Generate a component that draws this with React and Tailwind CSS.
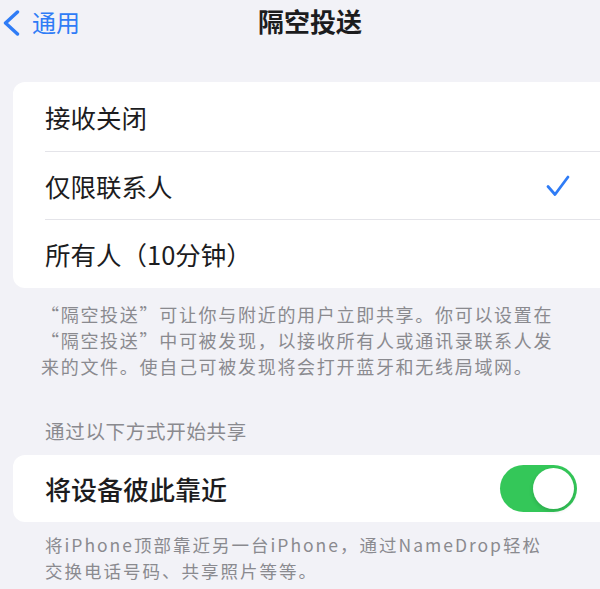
import { useState } from "react";

const rows = [
  { key: "off", label: "接收关闭" },
  { key: "contacts", label: "仅限联系人" },
  { key: "everyone", label: "所有人（10分钟）" },
];

function Chevron() {
  return (
    <svg width="18" height="26" viewBox="0 0 18 26" fill="none">
      <path d="M15.5 2 L3.5 13 L15.5 24" stroke="#2f7cf6" strokeWidth="3.4" strokeLinecap="round" strokeLinejoin="round" />
    </svg>
  );
}

function Check() {
  return (
    <svg width="26" height="24" viewBox="0 0 26 24" fill="none">
      <path d="M3 12.5 L10 20.5 L23 3" stroke="#2f7cf6" strokeWidth="2.8" strokeLinecap="round" strokeLinejoin="round" />
    </svg>
  );
}

function Toggle({ on, onChange }) {
  return (
    <button
      type="button"
      onClick={() => onChange(!on)}
      className={`relative w-[77px] h-[47px] rounded-full transition-colors ${on ? "bg-[#34c759]" : "bg-[#e3e3e8]"}`}
    >
      <span
        className={`absolute top-[3px] w-[41px] h-[41px] rounded-full bg-white shadow-[0_2px_4px_rgba(0,0,0,0.15)] transition-all ${on ? "left-[33px]" : "left-[3px]"}`}
      />
    </button>
  );
}

export default function App() {
  const [mode, setMode] = useState("contacts");
  const [nearby, setNearby] = useState(true);

  return (
    <div
      className="w-[600px] h-[589px] overflow-hidden bg-[#f2f2f7] text-[#1c1c1e]"
      style={{ fontFamily: '"Noto Sans CJK SC", "Noto Sans", sans-serif' }}
    >
      {/* nav bar */}
      <div className="relative h-[44px] flex items-center">
        <button className="flex items-center gap-[12px] pl-[2px] mt-[2px] text-[#2f7cf6] text-[24px] leading-none">
          <Chevron />
          <span className="-mt-[2px]">通用</span>
        </button>
        <div className="absolute left-[258px] top-[5px] text-[26px] font-bold leading-[32px]">隔空投送</div>
      </div>

      {/* receiving options */}
      <div className="mt-[38px] ml-[13px] bg-white rounded-l-[12px]">
        {rows.map((r, i) => (
          <button
            key={r.key}
            type="button"
            onClick={() => setMode(r.key)}
            className="w-full flex items-stretch pl-[32px] text-left"
          >
            <div
              className={`flex-1 h-[68.7px] flex items-center justify-between pr-[29px] ${i > 0 ? "border-t border-[#e4e4e9]" : ""}`}
            >
              <span className="text-[25.5px] leading-none">{r.label}</span>
              {mode === r.key && <Check />}
            </div>
          </button>
        ))}
      </div>

      <p className="pl-[41px] pt-[13px] text-[18px] leading-[26px] text-[#8a8a8f] tracking-[1.7px]">
        “隔空投送”可让你与附近的用户立即共享。你可以设置在
        <br />
        “隔空投送”中可被发现，以接收所有人或通讯录联系人发
        <br />
        来的文件。使自己可被发现将会打开蓝牙和无线局域网。
      </p>

      <div className="pl-[45px] mt-[42px] text-[19.5px] leading-[20px] text-[#8a8a8f] tracking-[0.7px]">通过以下方式开始共享</div>

      {/* NameDrop */}
      <div className="mt-[14px] ml-[13px] h-[67px] bg-white rounded-l-[12px] flex items-center justify-between pl-[32px] pr-[23px]">
        <span className="text-[26px] font-medium leading-none">将设备彼此靠近</span>
        <Toggle on={nearby} onChange={setNearby} />
      </div>

      <p className="pl-[45px] pt-[10px] text-[17.5px] leading-[25.5px] text-[#8a8a8f] tracking-[2px]">
        将iPhone顶部靠近另一台iPhone，通过NameDrop轻松
        <br />
        交换电话号码、共享照片等等。
      </p>
    </div>
  );
}
